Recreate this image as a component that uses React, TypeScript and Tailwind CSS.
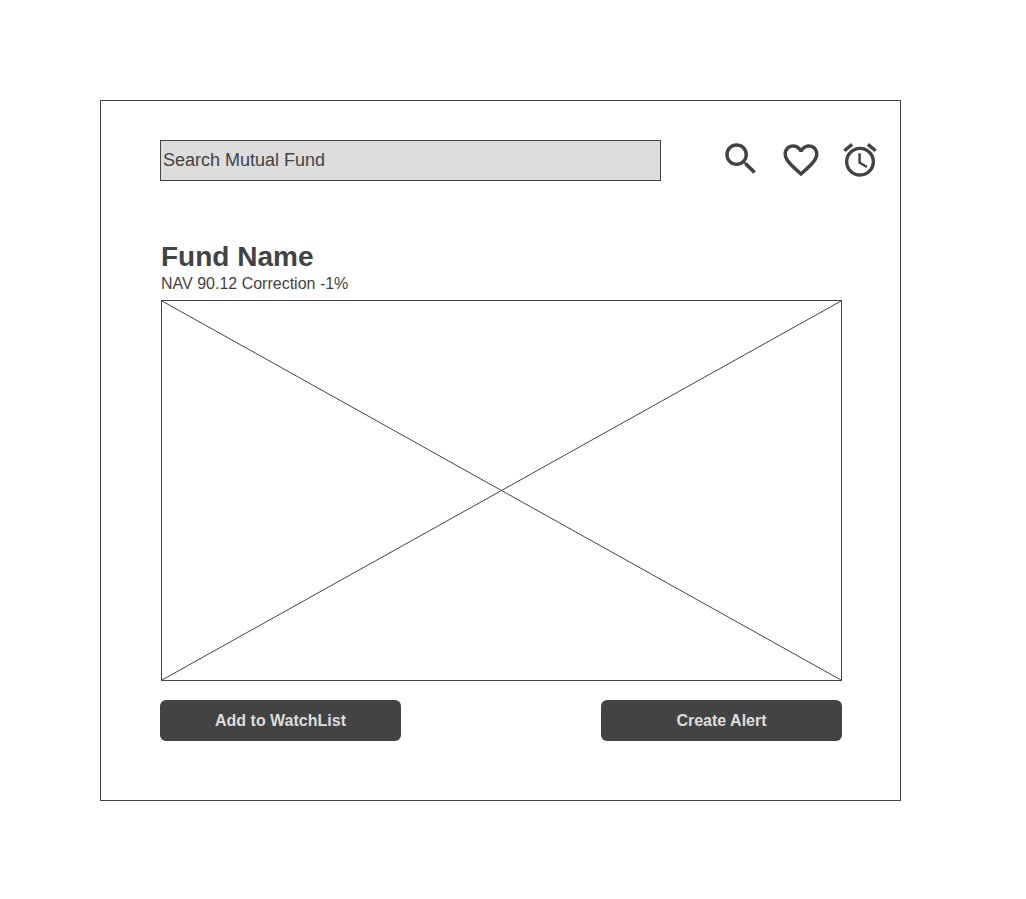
import React from "react";
import { MdAccessAlarm, MdFavoriteBorder, MdSearch } from "react-icons/md";

function Header() {
  return (
    <header className="flex items-center gap-[59px] pr-5">
      <input
        type="text"
        aria-label="Search Mutual Fund"
        placeholder="Search Mutual Fund"
        className="h-[41px] min-w-0 flex-1 border border-[#434343] bg-[#dddddd] px-0.5 text-lg text-[#434343] outline-none placeholder:text-[#434343] placeholder:opacity-100"
      />
      <nav aria-label="Actions" className="flex h-[41px] items-center gap-[18px] pb-0.5">
        <button type="button" aria-label="Search" className="pb-0.5">
          <MdSearch size={42} />
        </button>
        <button type="button" aria-label="Favourites">
          <MdFavoriteBorder size={42} />
        </button>
        <button type="button" aria-label="Alerts">
          <MdAccessAlarm size={40} />
        </button>
      </nav>
    </header>
  );
}

function ChartPlaceholder() {
  return (
    <div className="ml-px h-[381px] border border-[#434343]">
      <svg
        role="img"
        aria-label="Fund chart"
        className="block h-full w-full"
        viewBox="0 0 679 379"
        preserveAspectRatio="none"
        fill="none"
        stroke="#434343"
      >
        <path d="M0 0L679 379M679 0L0 379" vectorEffect="non-scaling-stroke" />
      </svg>
    </div>
  );
}

function ActionButton({ children }: { children: React.ReactNode }) {
  return (
    <button
      type="button"
      className="h-[41px] w-[241px] rounded-md bg-[#434343] text-base font-bold text-[#dddddd]"
    >
      {children}
    </button>
  );
}

export default function App() {
  return (
    <div className="min-h-screen bg-white pt-[100px] pr-[125px] pb-[98px] pl-[100px] font-['Liberation_Sans',Arial,sans-serif] text-[#434343]">
      <main className="border border-[#434343] pt-[39px] pb-[59px] pl-[59px]">
        <Header />
        <section className="pt-[59px] pr-[58px]">
          <h1 className="pl-px text-[28px] leading-[34px] font-bold">Fund Name</h1>
          <p className="mb-1.5 pl-px text-base leading-5">NAV 90.12 Correction -1%</p>
          <ChartPlaceholder />
          <div className="mt-[19px] flex justify-between">
            <ActionButton>Add to WatchList</ActionButton>
            <ActionButton>Create Alert</ActionButton>
          </div>
        </section>
      </main>
    </div>
  );
}
